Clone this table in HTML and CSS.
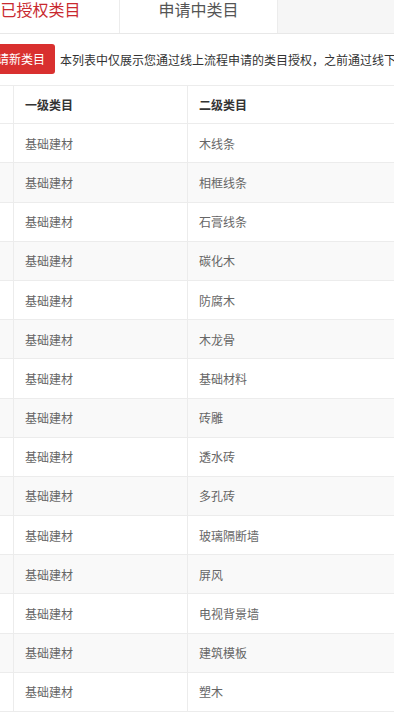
FILE: index.html
```html
<!DOCTYPE html>
<html lang="zh-CN">
<head>
<meta charset="utf-8">
<title>类目授权</title>
<link rel="stylesheet" href="styles.css">
</head>
<body>
<div class="page">
  <div class="tabs">
    <div class="tab active">已授权类目</div>
    <div class="tab">申请中类目</div>
  </div>
  <div class="toolbar">
    <button class="btn">申请新类目</button>
    <span class="notice">本列表中仅展示您通过线上流程申请的类目授权，之前通过线下的类目授权不在此列表中展示</span>
  </div>
  <div class="table">
    <div class="row head">
      <div class="cell"></div>
      <div class="cell">一级类目</div>
      <div class="cell">二级类目</div>
    </div>
    <div class="row"><div class="cell"></div><div class="cell">基础建材</div><div class="cell">木线条</div></div>
    <div class="row"><div class="cell"></div><div class="cell">基础建材</div><div class="cell">相框线条</div></div>
    <div class="row"><div class="cell"></div><div class="cell">基础建材</div><div class="cell">石膏线条</div></div>
    <div class="row"><div class="cell"></div><div class="cell">基础建材</div><div class="cell">碳化木</div></div>
    <div class="row"><div class="cell"></div><div class="cell">基础建材</div><div class="cell">防腐木</div></div>
    <div class="row"><div class="cell"></div><div class="cell">基础建材</div><div class="cell">木龙骨</div></div>
    <div class="row"><div class="cell"></div><div class="cell">基础建材</div><div class="cell">基础材料</div></div>
    <div class="row"><div class="cell"></div><div class="cell">基础建材</div><div class="cell">砖雕</div></div>
    <div class="row"><div class="cell"></div><div class="cell">基础建材</div><div class="cell">透水砖</div></div>
    <div class="row"><div class="cell"></div><div class="cell">基础建材</div><div class="cell">多孔砖</div></div>
    <div class="row"><div class="cell"></div><div class="cell">基础建材</div><div class="cell">玻璃隔断墙</div></div>
    <div class="row"><div class="cell"></div><div class="cell">基础建材</div><div class="cell">屏风</div></div>
    <div class="row"><div class="cell"></div><div class="cell">基础建材</div><div class="cell">电视背景墙</div></div>
    <div class="row"><div class="cell"></div><div class="cell">基础建材</div><div class="cell">建筑模板</div></div>
    <div class="row"><div class="cell"></div><div class="cell">基础建材</div><div class="cell">塑木</div></div>
  </div>
</div>
</body>
</html>
```

FILE: styles.css
```css
* { box-sizing: border-box; }
html, body {
  margin: 0;
  padding: 0;
  background: #fff;
  overflow: hidden;
}
body {
  font-family: "Noto Sans CJK SC", "Microsoft YaHei", "Liberation Sans", sans-serif;
  color: #333;
}
.page {
  margin-left: -38px;
  width: 640px;
}
.tabs {
  display: flex;
  height: 34px;
  background: #f6f6f6;
  border-bottom: 1px solid #e8e8e8;
}
.tab {
  width: 158px;
  height: 33px;
  background: #fff;
  border-right: 1px solid #ececec;
  text-align: center;
  font-size: 16px;
  line-height: 19px;
  color: #555;
}
.tab.active {
  color: #c9292f;
}
.toolbar {
  display: flex;
  align-items: center;
  gap: 5px;
  padding: 10px 0 11px 13px;
  white-space: nowrap;
}
.btn {
  flex: none;
  height: 30px;
  padding: 0 10px;
  border: 0;
  border-radius: 3px;
  background: #d9302f;
  color: #fff;
  font-family: inherit;
  font-size: 12px;
  line-height: 30px;
}
.notice {
  font-size: 12px;
  color: #333;
}
.table {
  margin-left: 13px;
  border-top: 1px solid #ececec;
}
.row {
  display: grid;
  grid-template-columns: 39px 174px 1fr;
  height: 39.2px;
  border-bottom: 1px solid #ececec;
  font-size: 12px;
  color: #666;
}
.row:nth-child(odd) {
  background: #f9f9f9;
}
.row.head {
  height: 38.2px;
  background: #fff;
  color: #333;
  font-weight: bold;
}
.cell {
  display: flex;
  align-items: center;
  padding-left: 11px;
  border-right: 1px solid #ececec;
}
```
